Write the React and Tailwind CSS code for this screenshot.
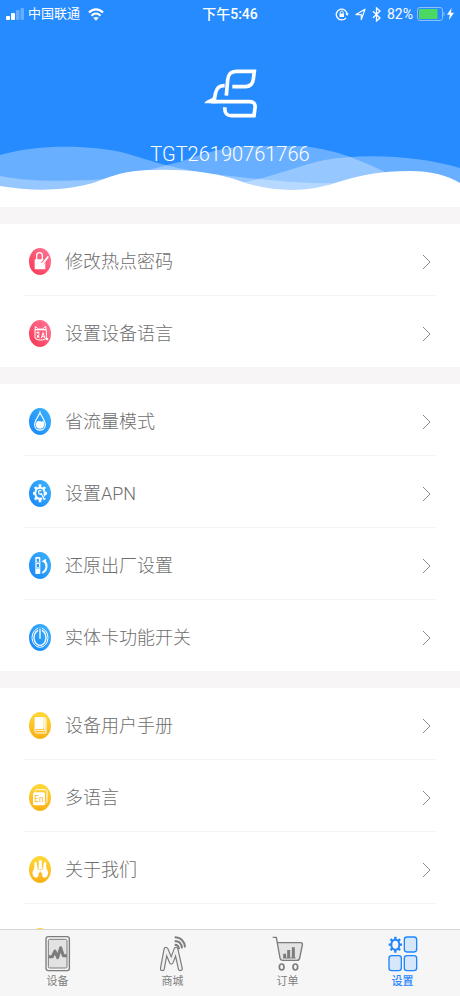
import React, { useState } from 'react';

const Gradients = () => (
    <svg className="absolute w-0 h-0" aria-hidden="true">
        <defs>
            <linearGradient id="pink" x1="1" y1="0" x2="0" y2="1">
                <stop offset="0" stopColor="#ff7c9b" />
                <stop offset="1" stopColor="#f93350" />
            </linearGradient>
            <linearGradient id="blue" x1="1" y1="0" x2="0" y2="1">
                <stop offset="0" stopColor="#3fb4fb" />
                <stop offset="1" stopColor="#1586fa" />
            </linearGradient>
            <linearGradient id="yellow" x1="0" y1="0" x2="0" y2="1">
                <stop offset="0" stopColor="#ffd83a" />
                <stop offset="1" stopColor="#fbb017" />
            </linearGradient>
        </defs>
    </svg>
);

const Badge = ({ color, children }) => (
    <svg viewBox="0 0 66 81" className="w-[22px] h-[27px] shrink-0" aria-hidden="true">
        <ellipse cx="33" cy="40.5" rx="33" ry="40.5" fill={`url(#${color})`} />
        {children}
    </svg>
);

const LockIcon = () => (
    <Badge color="pink">
        <path d="M23 36V23c0-12 17-12 17 0v13" fill="none" stroke="#fff" strokeWidth="4" />
        <rect x="17" y="34" width="32" height="30" rx="2" fill="#fff" />
        <path d="M58 24L40 47" stroke="#fb5571" strokeWidth="10" />
        <path d="M56 23L38 46l-3 8 8-4 17-23z" fill="#fff" />
    </Badge>
);

const LanguageIcon = () => (
    <Badge color="pink">
        <path d="M18 33l1-14 9 8h13l9-8 2 14v21c-4 8-30 8-34 0z" fill="none" stroke="#fff" strokeWidth="3" />
        <path d="M18 29h33" stroke="#fff" strokeWidth="4" />
        <path d="M22 38h10M27 34v8M23 55l8-13M23 44l9 11M37 55l5-17 6 17M39 50h7M24 49h7" fill="none" stroke="#fff" strokeWidth="3" />
        <circle cx="54" cy="57" r="4" fill="#fff" />
    </Badge>
);

const DropIcon = () => (
    <Badge color="blue">
        <path d="M33 13c4 13 16 23 16 37 0 22-32 22-32 0 0-14 12-24 16-37z" fill="none" stroke="#fff" strokeWidth="3.5" />
        <path d="M23 41c7-6 12 4 20-3 6 14 1 24-10 24S18 52 23 41z" fill="#fff" />
    </Badge>
);

const GearIcon = () => (
    <Badge color="blue">
        <g stroke="#fff" strokeWidth="8">
            <path d="M33 13v54M12 40h42M18 21l30 38M48 21L18 59" />
        </g>
        <ellipse cx="33" cy="40" rx="17" ry="20" fill="#fff" />
        <ellipse cx="33" cy="40" rx="11" ry="13" fill="#259af9" />
        <path d="M38 33c-5-5-12-1-10 6 1 6 6 7 9 4l9 14" fill="none" stroke="#259af9" strokeWidth="9" />
        <path d="M37 33c-4-4-10-1-8 5 1 5 5 6 8 3l9 17" fill="none" stroke="#fff" strokeWidth="4" />
    </Badge>
);

const RestoreIcon = () => (
    <Badge color="blue">
        <rect x="19" y="15" width="15" height="51" rx="2" fill="#fff" />
        <path d="M23 20h7v9h-7zM23 36h7v9h-7z" fill="#259af9" />
        <path d="M20 32h13M20 48h13" stroke="#259af9" strokeWidth="2" />
        <path d="M46 27c11 11 8 28-6 36" fill="none" stroke="#fff" strokeWidth="6" />
        <path d="M38 28l13-8v15z" fill="#fff" />
    </Badge>
);

const PowerIcon = () => (
    <Badge color="blue">
        <ellipse cx="33" cy="41" rx="24" ry="29" fill="none" stroke="#fff" strokeWidth="3" />
        <ellipse cx="33" cy="41" rx="18" ry="23" fill="none" stroke="#fff" strokeWidth="4" />
        <path d="M33 11v32" stroke="#2a9ffa" strokeWidth="11" />
        <path d="M33 14v30" stroke="#fff" strokeWidth="4" />
    </Badge>
);

const BookIcon = () => (
    <Badge color="yellow">
        <rect x="17" y="15" width="27" height="36" rx="4" fill="#fff" />
        <path d="M18 46v11c0 4 2 6 5 6h28V20l-4-4v39H22" fill="none" stroke="#fff" strokeWidth="3" />
    </Badge>
);

const EnIcon = () => (
    <Badge color="yellow">
        <path d="M19 23c0-4 1-6 5-6h25c4 0 5 2 5 6v29c0 4-1 5-5 5" fill="none" stroke="#fff" strokeWidth="3" />
        <rect x="12" y="25" width="36" height="39" rx="5" fill="#fff" />
        <text x="30" y="54" textAnchor="middle" fontSize="25" fontFamily="Roboto, sans-serif" fill="#fbb81e">En</text>
    </Badge>
);

const PeopleIcon = () => (
    <Badge color="yellow">
        <g fill="#fff">
            <ellipse cx="34" cy="18" rx="5" ry="6" />
            <path d="M30 22h8l3 18H27z" />
            <ellipse cx="20" cy="24" rx="4" ry="6" />
            <ellipse cx="48" cy="24" rx="4" ry="6" />
            <path d="M17 27h7l3 13 7 3 7-3 3-13h7l2 13c8 8 5 24-6 25-7 0-8-5-7-11l-6-8-6 8c1 6 0 11-7 11-11-1-14-17-6-25z" />
        </g>
        <path d="M27 30v10M41 30v10" stroke="#fdc42a" strokeWidth="2" />
    </Badge>
);

const groups = [
    [
        { label: '修改热点密码', Icon: LockIcon },
        { label: '设置设备语言', Icon: LanguageIcon },
    ],
    [
        { label: '省流量模式', Icon: DropIcon },
        { label: '设置APN', Icon: GearIcon },
        { label: '还原出厂设置', Icon: RestoreIcon },
        { label: '实体卡功能开关', Icon: PowerIcon },
    ],
    [
        { label: '设备用户手册', Icon: BookIcon },
        { label: '多语言', Icon: EnIcon },
        { label: '关于我们', Icon: PeopleIcon },
    ],
];

const DeviceTabIcon = () => (
    <svg viewBox="0 0 78 108" className="w-[26px] h-9" aria-hidden="true">
        <rect x="6" y="4" width="70" height="102" rx="6" fill="#dcdcdc" />
        <rect x="3" y="2" width="70" height="102" rx="7" fill="#f6f6f6" stroke="#7c7c7c" strokeWidth="4" />
        <rect x="10" y="10" width="56" height="86" rx="4" fill="#e2e2e2" stroke="#7c7c7c" strokeWidth="3" />
        <path d="M11 62h11l8-17 8 20 9-30 8 24h11" fill="none" stroke="#7c7c7c" strokeWidth="9" strokeLinejoin="round" />
    </svg>
);

const MallTabIcon = () => (
    <svg viewBox="0 0 78 108" className="w-[26px] h-9" aria-hidden="true">
        <path d="M7 98L18 40l16 38 14-38 13 58" fill="none" stroke="#7c7c7c" strokeWidth="15" strokeLinecap="round" strokeLinejoin="round" />
        <path d="M7 98L18 40l16 38 14-38 13 58" fill="none" stroke="#f0f0f0" strokeWidth="8" strokeLinecap="round" strokeLinejoin="round" />
        <path d="M44 26c8 0 13 5 13 14M44 15c13 0 21 9 22 22M44 4c18 0 30 12 31 30" fill="none" stroke="#7c7c7c" strokeWidth="6" />
    </svg>
);

const OrderTabIcon = () => (
    <svg viewBox="0 0 96 108" className="w-8 h-9" aria-hidden="true">
        <path d="M15 20h71c5 0 6 3 5 7L83 66c-1 5-3 7-8 7H31c-5 0-7-2-8-7z" fill="#e4e4e4" />
        <path d="M2 4h11l11 62c1 5 3 7 8 7h43c5 0 7-2 8-7l8-39c1-4 0-7-5-7H16" fill="none" stroke="#7c7c7c" strokeWidth="4" />
        <path d="M38 66V53M50 66V42M64 66V34" stroke="#7c7c7c" strokeWidth="9" />
        <path d="M33 66h38" stroke="#7c7c7c" strokeWidth="3" />
        <ellipse cx="29" cy="93" rx="7" ry="9" fill="none" stroke="#7c7c7c" strokeWidth="5" />
        <ellipse cx="70" cy="93" rx="7" ry="9" fill="none" stroke="#7c7c7c" strokeWidth="5" />
    </svg>
);

const SettingsTabIcon = () => (
    <svg viewBox="0 0 90 108" className="w-[30px] h-9" aria-hidden="true">
        <g stroke="#1f86fb" strokeWidth="7">
            <path d="M22 2v48M2 26h40M8 9l28 34M36 9L8 43" />
        </g>
        <ellipse cx="22" cy="26" rx="12" ry="15" fill="#f6f6f6" stroke="#1f86fb" strokeWidth="6" />
        <g fill="#d6e6fb" stroke="#1f86fb" strokeWidth="4">
            <rect x="49" y="3" width="37" height="45" rx="8" />
            <rect x="3" y="59" width="37" height="45" rx="8" />
            <rect x="49" y="59" width="37" height="45" rx="8" />
        </g>
    </svg>
);

const tabs = [
    { label: '设备', Icon: DeviceTabIcon },
    { label: '商城', Icon: MallTabIcon },
    { label: '订单', Icon: OrderTabIcon },
    { label: '设置', Icon: SettingsTabIcon },
];

const StatusBar = () => (
    <div className="relative grid grid-cols-[1fr_auto_1fr] items-center h-7 px-1.5 text-sm">
        <div className="flex items-center gap-1">
            <svg viewBox="0 0 18 12" className="w-[18px] h-3" fill="#fff" aria-hidden="true">
                <rect x="0" y="8" width="4" height="4" rx="1" />
                <rect x="5" y="5" width="4" height="7" rx="1" />
                <rect x="10" y="2" width="3.5" height="10" rx="1" opacity="0.3" />
                <rect x="14.5" y="0" width="3.5" height="12" rx="1" opacity="0.3" />
            </svg>
            <span className="text-[13px]">中国联通</span>
            <svg viewBox="0 0 16 13" className="w-4 h-[13px] ml-1" fill="none" stroke="#fff" strokeWidth="2.2" aria-hidden="true">
                <path d="M1 4.6c4-4.300 10-4.300 14 0" />
                <path d="M3.5 7.7c2.7-2.7 6.3-2.7 9 0" />
                <path d="M8 12.8L5.4 10c1.6-1.500 3.6-1.500 5.2 0z" fill="#fff" stroke="none" />
            </svg>
        </div>
        <span className="font-medium">下午5:46</span>
        <div className="flex items-center justify-end gap-1.5">
            <svg viewBox="0 0 14 14" className="w-3.5 h-3.5" fill="none" stroke="#fff" strokeWidth="1.3" aria-hidden="true">
                <path d="M11 10.8A5.4 5.4 0 1 1 12.1 7.5" />
                <path d="M10.3 6.5h3.5l-1.7 2.5z" fill="#fff" stroke="none" />
                <rect x="4.5" y="6.5" width="4.5" height="3.5" fill="#fff" stroke="none" />
                <path d="M5.3 6.5V5.3c0-1.7 2.9-1.7 2.9 0v1.2" strokeWidth="1" />
            </svg>
            <svg viewBox="0 0 11 13" className="w-[11px] h-[13px]" fill="none" stroke="#fff" strokeWidth="1.2" aria-hidden="true">
                <path d="M1 6.6L10 1.2 6.3 11.6V6.6z" strokeLinejoin="round" />
            </svg>
            <svg viewBox="0 0 9 15" className="w-[9px] h-[15px]" fill="none" stroke="#fff" strokeWidth="1.3" aria-hidden="true">
                <path d="M1 4.200l7 6.800-3.500 3V1L8 4l-7 6.800" />
            </svg>
            <span>82%</span>
            <svg viewBox="0 0 28 14" className="w-7 h-3.5 -ml-0.5" aria-hidden="true">
                <rect x="0.5" y="0.5" width="25" height="13" rx="2.5" fill="none" stroke="#8fc0fb" />
                <rect x="2" y="2" width="18.5" height="10" rx="1" fill="#4bd964" />
                <path d="M26.500 4.500c1.500.8 1.500 4.200 0 5z" fill="#8fc0fb" />
            </svg>
            <svg viewBox="0 0 7 12" className="w-[7px] h-3 -ml-1" fill="#fff" aria-hidden="true">
                <path d="M4.500 0L0 6.800h2.800L2 12l5-7.200H4z" />
            </svg>
        </div>
    </div>
);

const Header = () => (
    <header className="relative shrink-0 bg-[#268bff] text-white">
        <svg viewBox="0 146 460 61" preserveAspectRatio="none" className="absolute bottom-0 left-0 w-full h-[61px]" aria-hidden="true">
            <path d="M0 155C40 144 90 145 125 153C155 162 175 170 230 176S310 184 345 183V207H0z" fill="#fff" fillOpacity="0.31" />
            <path d="M0 176C30 182 65 181 90 180C130 178 155 167 180 162C210 150 235 146 265 145C320 144 345 153 385 172V207H0z" fill="#fff" fillOpacity="0.31" />
            <path d="M240 183C270 178 300 165 325 160C365 153 420 156 460 168V207H240z" fill="#fff" fillOpacity="0.31" />
            <path d="M0 186C30 191 60 191 85 185C108 180 115 170 155 170C190 169 220 174 240 181C270 192 305 193 335 183C360 175 380 171 410 171C430 171 447 175 460 183V207H0z" fill="#fff" />
        </svg>
        <StatusBar />
        <div className="relative flex flex-col items-center gap-5 pt-[41px] pb-[37px]">
            <svg viewBox="40 29 159 147" className="w-[53px] h-[49px]" fill="none" stroke="#fff" strokeWidth="11" aria-hidden="true">
                <path d="M107 109L111 62C113 44 119 36 137 36H191L188 60C186 75 178 82 164 82H125" />
                <path d="M102 79C84 79 78 87 75 100L71 119" />
                <path d="M60 127H176C190 127 195 134 193 146L190 169H123C109 169 102 163 102 144" />
                <path d="M41 132C46 122 58 121 68 113L80 123V132z" fill="#fff" stroke="none" />
            </svg>
            <h1 className="text-xl leading-8 font-light">TGT26190761766</h1>
        </div>
    </header>
);

const App = () => {
    const [active, setActive] = useState('设置');

    return (
        <div className="flex flex-col h-screen bg-[#f7f5f6] font-[Roboto,'Noto_Sans_CJK_SC',sans-serif]">
            <Gradients />
            <Header />
            <main className="flex-1 min-h-0 overflow-y-auto [scrollbar-width:none] flex flex-col gap-[17px] pt-[17px]">
                {groups.map((group, index) => (
                    <ul key={index} className="shrink-0 bg-white px-6">
                        {group.map(({ label, Icon }, i) => (
                            <li key={label} className={i < group.length - 1 || index === 2 ? 'border-b border-[#f4f4f4]' : ''}>
                                <button type="button" className="flex items-center w-full h-[71px] pt-1 pl-[5px] pr-1 text-left">
                                    <Icon />
                                    <span className="flex-1 ml-3.5 text-lg font-light text-[#6e6e6e]">{label}</span>
                                    <svg viewBox="0 0 11 16" className="w-[11px] h-4" fill="none" stroke="#8c8c8c" strokeWidth="1" aria-hidden="true">
                                        <path d="M2 1l7 7-7 7" />
                                    </svg>
                                </button>
                            </li>
                        ))}
                        {index === 2 && (
                            <li className="flex items-center h-[71px] pt-1 pl-[5px]">
                                <Badge color="yellow" />
                            </li>
                        )}
                    </ul>
                ))}
            </main>
            <nav className="shrink-0 grid grid-cols-4 h-[67px] bg-[#f6f6f6] border-t border-[#d6d6d6]">
                {tabs.map(({ label, Icon }) => (
                    <button
                        key={label}
                        type="button"
                        onClick={() => setActive(label)}
                        className={`flex flex-col items-center pt-1.5 gap-0.5 text-[11px] leading-4 ${active === label ? 'text-[#1f86fb] font-medium' : 'text-[#808080]'}`}
                    >
                        <Icon />
                        <span>{label}</span>
                    </button>
                ))}
            </nav>
        </div>
    );
};

export default App;
